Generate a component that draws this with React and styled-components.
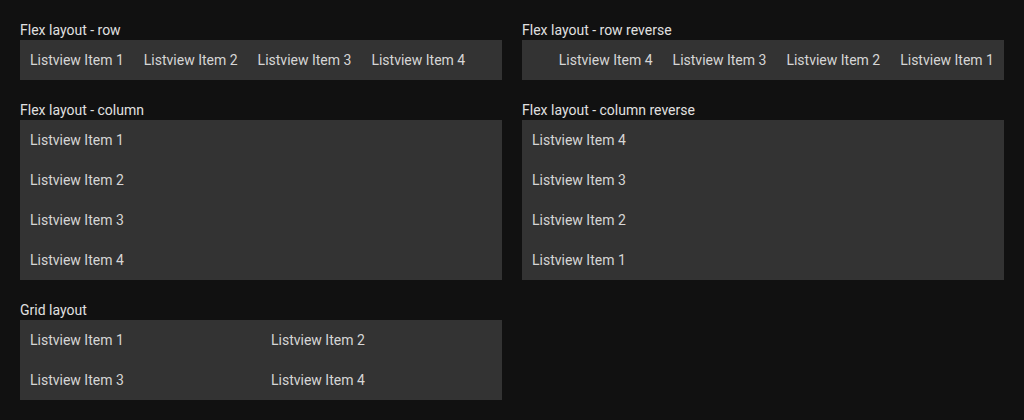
import React from "react";
import styled, { createGlobalStyle } from "styled-components";

const Global = createGlobalStyle`
  html, body { margin: 0; padding: 0; background: #111111; }
  body { font-family: Roboto, "Noto Sans", sans-serif; font-size: 14px; color: #e0e0e0; }
`;

const Page = styled.div`
  display: grid;
  grid-template-columns: 1fr 1fr;
  column-gap: 20px;
  row-gap: 20px;
  padding: 20px;
  align-items: start;
`;

const Section = styled.section`
  display: flex;
  flex-direction: column;
`;

const Label = styled.div`
  height: 20px;
  line-height: 20px;
  color: #e0e0e0;
`;

const List = styled.div`
  background: #333333;
  display: ${(p) => (p.$grid ? "grid" : "flex")};
  flex-direction: ${(p) => p.$dir || "row"};
  grid-template-columns: 1fr 1fr;
`;

const Item = styled.div`
  height: 40px;
  line-height: 40px;
  padding: 0 10px;
  color: #d6d6d6;
  white-space: nowrap;
`;

const items = ["Listview Item 1", "Listview Item 2", "Listview Item 3", "Listview Item 4"];

const Block = ({ title, dir, grid }) => (
  <Section>
    <Label>{title}</Label>
    <List $dir={dir} $grid={grid}>
      {items.map((t) => (
        <Item key={t}>{t}</Item>
      ))}
    </List>
  </Section>
);

export default function App() {
  return (
    <>
      <Global />
      <Page>
        <Block title="Flex layout - row" dir="row" />
        <Block title="Flex layout - row reverse" dir="row-reverse" />
        <Block title="Flex layout - column" dir="column" />
        <Block title="Flex layout - column reverse" dir="column-reverse" />
        <Block title="Grid layout" grid />
      </Page>
    </>
  );
}
